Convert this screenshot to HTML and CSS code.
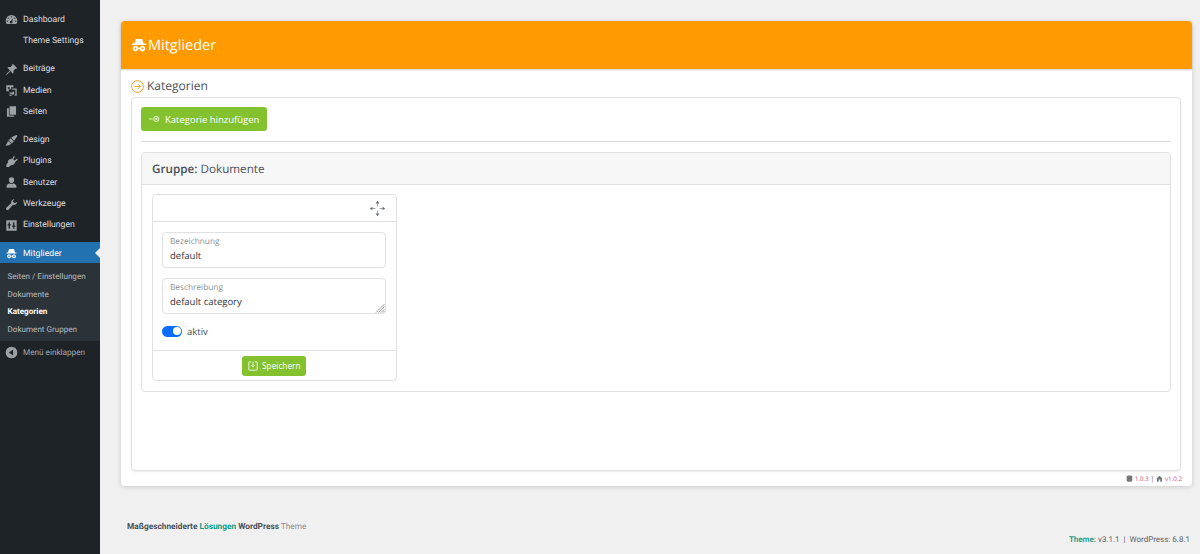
FILE: index.html
```html
<!DOCTYPE html>
<html lang="de">
  <head>
    <meta charset="utf-8" />
    <title>Mitglieder</title>
    <link rel="stylesheet" href="styles.css">
  </head>
  <body>
    <nav class="sidebar">
      <ul class="menu">
        <li class="item">
          <svg class="ico" viewBox="0 0 20 20"><path d="M10 3a9 9 0 0 0-9 9c0 2 .6 3.600 1.600 5h14.800c1-1.400 1.600-3 1.600-5a9 9 0 0 0-9-9zM10 5a1 1 0 1 1 0 2 1 1 0 0 1 0-2zM5 7a1 1 0 1 1 0 2 1 1 0 0 1 0-2zM15 7a1 1 0 1 1 0 2 1 1 0 0 1 0-2zM3.500 11.500a1 1 0 1 1 0 2 1 1 0 0 1 0-2zM16.500 11.500a1 1 0 1 1 0 2 1 1 0 0 1 0-2zM13 8l-2 4.600a2 2 0 1 1-1.500-.6z" fill-rule="evenodd"/></svg>
          Dashboard
        </li>
        <li class="item">
          <span class="ico"></span>
          Theme Settings
        </li>
        <li class="sep"></li>
        <li class="item">
          <svg class="ico" viewBox="0 0 20 20"><path d="M12 1l7 7-1.500 1-1-.5-3.500 3.500c.5 2 .2 3.500-.8 4.500L8.500 12.300 3 18l-1 0 0-1 5.700-5.500L3.500 7.300c1-1 2.500-1.300 4.500-.8L11.500 3l-.5-1z"/></svg>
          Beiträge
        </li>
        <li class="item">
          <svg class="ico" viewBox="0 0 20 20"><path d="M2 2h11v3H9.500v3H6v3H2zM6 4.500a1.500 1.500 0 1 0 0 3 1.500 1.500 0 0 0 0-3zM11 7h7v11h-3v-2h1V9h-5zM7 13h2.500v1.500H8.500V16H7zM11 12h3v4h-1.500a2 2 0 1 1 0-3H11zM7 17h3v1.500H7z" fill-rule="evenodd"/></svg>
          Medien
        </li>
        <li class="item">
          <svg class="ico" viewBox="0 0 20 20"><path d="M7 2h10v13H7zM3 5h3v11h8v2H3z"/></svg>
          Seiten
        </li>
        <li class="sep"></li>
        <li class="item">
          <svg class="ico" viewBox="0 0 20 20"><path d="M19 2.500l-1-1c-3 .8-6 2.200-8.500 4.200l4.500 4.500c2-2.500 4-5 5-7.700zM8.500 6.500L5.500 9.500l5 5 3-3zM4.500 10.500C4 13 3 15 .5 17.500c3.500.8 7-.5 9-3z"/></svg>
          Design
        </li>
        <li class="item">
          <svg class="ico" viewBox="0 0 20 20"><path d="M13.500 1.500l1.800 1-2.800 4 2.500 2 3.500-3 1 1.800-4 4c-.5 3-3 4.800-6 4.200L6 18.500H2v-3.500l2.500-3c-.5-3 1-5.500 4-6l1-.8 1.500 1.500z"/></svg>
          Plugins
        </li>
        <li class="item">
          <svg class="ico" viewBox="0 0 20 20"><path d="M10 2a4 4 0 0 1 4 4.500c0 2.500-1.800 4.500-4 4.500s-4-2-4-4.500A4 4 0 0 1 10 2zM7 11.500c1.800 1 4.200 1 6 0 2.500.5 4.500 2 4.500 4V18h-15v-2.500c0-2 2-3.500 4.500-4z"/></svg>
          Benutzer
        </li>
        <li class="item">
          <svg class="ico" viewBox="0 0 20 20"><path d="M18.500 6c0 3-3 5.300-6.300 4.500L5.500 18c-1 1-2.200 1-3.200 0s-.8-2.200 0-3.200L9.500 8C9 5 11 1.500 14.500 1.500l-2.300 3 1 2.300 2.300 1z"/></svg>
          Werkzeuge
        </li>
        <li class="item">
          <svg class="ico" viewBox="0 0 20 20"><path d="M2 2h16v16H2zM5.500 5v3H4v2h1.500v5h2v-5H9V8H7.500V5zM12.500 5v5H11v2h1.500v3h2v-3H16v-2h-1.500V5z" fill-rule="evenodd"/></svg>
          Einstellungen
        </li>
        <li class="sep"></li>
        <li class="item current">
          <svg class="ico ico-spy" viewBox="0 0 20 20"><path d="M5.500 2h9l2 6H19v2H1V8h2.500zM5.500 11.500a3.500 3.500 0 0 1 3.400 2.700h2.200a3.500 3.500 0 1 1-.1 1.600H8.900a3.500 3.500 0 1 1-3.400-4.300zM5.500 13.500a1.500 1.500 0 1 0 0 3 1.500 1.500 0 0 0 0-3zM14.500 13.500a1.500 1.500 0 1 0 0 3 1.500 1.500 0 0 0 0-3z" fill-rule="evenodd"/></svg>
          Mitglieder
        </li>
        <li class="submenu">
          <a>Seiten / Einstellungen</a>
          <a>Dokumente</a>
          <a class="active">Kategorien</a>
          <a>Dokument Gruppen</a>
        </li>
        <li class="item collapse">
          <svg class="ico" viewBox="0 0 20 20"><path d="M10 1a9 9 0 1 0 0 18 9 9 0 0 0 0-18zM12.500 5.500v9L6 10z" fill-rule="evenodd"/></svg>
          Menü einklappen
        </li>
      </ul>
    </nav>

    <div class="page">
      <main class="panel">
        <header class="panel-head">
          <svg class="head-ico" viewBox="0 0 20 20"><path d="M5.500 1.500h9l2 6.500H20v2H0V8h3.500zM5 11a4 4 0 0 1 3.900 3h2.200a4 4 0 1 1-.1 2H8.900A4 4 0 1 1 5 11zM5 13.500a1.500 1.500 0 1 0 0 3 1.500 1.500 0 0 0 0-3zM15 13.500a1.500 1.500 0 1 0 0 3 1.500 1.500 0 0 0 0-3z" fill-rule="evenodd"/></svg>
          <h1>Mitglieder</h1>
        </header>

        <div class="panel-body">
          <div class="section-title">
            <svg class="circle-ico" viewBox="0 0 16 16"><circle cx="8" cy="8" r="7.300"/><path d="M4 8h7.500M8.500 5l3 3-3 3"/></svg>
            <h2>Kategorien</h2>
          </div>

          <div class="box">
            <button class="btn btn-add">
              <svg class="add-ico" viewBox="0 0 16 10"><path d="M0 5h5"/><circle cx="10.500" cy="5" r="3.800"/><path d="M8.700 5h3.600M10.500 3.200v3.600"/></svg>
              Kategorie hinzufügen
            </button>
            <hr class="rule" />

            <section class="group">
              <div class="group-head"><b>Gruppe:</b> Dokumente</div>
              <div class="group-body">
                <div class="cat-card">
                  <div class="cat-top">
                    <svg class="move-ico" viewBox="0 0 20 20"><path class="move-line" d="M10 4v3.500M10 12.500V16M4 10h3.500M12.500 10H16"/><path d="M10 1l2.200 3H7.800zM10 19l2.200-3H7.800zM1 10l3-2.200v4.400zM19 10l-3-2.200v4.400z"/></svg>
                  </div>
                  <div class="cat-fields">
                    <div class="field">
                      <span class="field-label">Bezeichnung</span>
                      <span class="field-value">default</span>
                    </div>
                    <div class="field">
                      <span class="field-label">Beschreibung</span>
                      <span class="field-value">default category</span>
                      <svg class="resize" viewBox="0 0 10 10"><path d="M9.500 1L1 9.500M9.500 3.500L3.500 9.500M9.500 6L6 9.500M9.500 8L8 9.500"/></svg>
                    </div>
                    <div class="switch-row">
                      <span class="switch"><span class="knob"></span></span>
                      aktiv
                    </div>
                  </div>
                  <div class="cat-foot">
                    <button class="btn btn-save">
                      <svg class="save-ico" viewBox="0 0 12 12"><path d="M4 1H1.500a.5.5 0 0 0-.5.5v9a.5.5 0 0 0 .5.5h9a.5.5 0 0 0 .5-.5v-9a.5.5 0 0 0-.5-.5H8"/><path d="M6 1v6M4.200 5.200L6 7l1.800-1.800"/></svg>
                      Speichern
                    </button>
                  </div>
                </div>
              </div>
            </section>
          </div>
        </div>

        <div class="versions">
          <svg class="ver-ico" viewBox="0 0 10 10"><path d="M1 2C1 .5 9 .5 9 2v6.500C9 10 1 10 1 8.500z"/></svg>
          <span class="ver">1.0.3</span> |
          <svg class="ver-ico" viewBox="0 0 10 10"><path d="M5 1l4.500 4.500H8.500V9.500H6V6.500H4v3H1.500V5.500H.5z"/></svg>
          <span class="ver">v1.0.2</span>
        </div>
      </main>

      <footer class="foot">
        <div class="foot-left"><b>Maßgeschneiderte <em>Lösungen</em> WordPress</b> <span class="foot-theme">Theme</span></div>
        <div class="foot-right"><b>Theme:</b> v3.1.1 &nbsp;|&nbsp; WordPress: 6.8.1</div>
      </footer>
    </div>
  </body>
</html>
```

FILE: styles.css
```css
* {
  box-sizing: border-box;
}
html,
body {
  height: 100%;
}
body {
  margin: 0;
  display: flex;
  height: 554px;
  overflow: hidden;
  background: #f0f0f1;
  color: #495057;
  font-family: "Open Sans", "Noto Sans", sans-serif;
  text-rendering: geometricPrecision;
}

/* sidebar */
.sidebar {
  width: 100px;
  flex: none;
  background: #1d2327;
  color: #f0f0f1;
  font-family: Roboto, sans-serif;
  font-size: 8.700px;
}
.menu {
  list-style: none;
  margin: 0;
  padding: 8px 0 0;
}
.item {
  display: flex;
  align-items: center;
  gap: 5px;
  height: 21.300px;
  padding: 2px 0 0 5px;
  color: #dcdee0;
}
.sep {
  height: 7px;
}
.ico {
  width: 13px;
  height: 13px;
  flex: none;
  fill: #9ca1a6;
}
.current {
  position: relative;
  background: #2271b1;
  color: #fff;
}
.current .ico {
  fill: #fff;
}
.ico-spy {
  padding: 1px;
}
.current::after {
  content: "";
  position: absolute;
  right: 0;
  top: 6px;
  border: 5px solid transparent;
  border-right-color: #f0f0f1;
  border-left: 0;
}
.submenu {
  display: flex;
  flex-direction: column;
  background: #2c3338;
  padding: 5px 0 3px 7.500px;
  color: #b9bcc0;
  font-size: 8.100px;
}
.submenu a {
  height: 17.500px;
  line-height: 17.500px;
}
.submenu .active {
  color: #fff;
  font-weight: 700;
}
.collapse {
  color: #a7aaad;
  font-size: 8.200px;
}

/* main panel */
.page {
  flex: 1;
  display: flex;
  flex-direction: column;
  padding: 21px 8px 0 21px;
  min-width: 0;
}
.panel {
  height: 465px;
  background: #fff;
  border-radius: 4px;
  box-shadow: 0 1px 5px rgba(0, 0, 0, 0.16);
  display: flex;
  flex-direction: column;
}
.panel-head {
  display: flex;
  align-items: center;
  gap: 2px;
  height: 48px;
  padding-left: 11px;
  background: #ff9b00;
  color: #fff;
  border-radius: 4px 4px 0 0;
  box-shadow: 0 1px 2px rgba(0, 0, 0, 0.2);
}
.head-ico {
  width: 14px;
  height: 14px;
  fill: #fff;
}
h1 {
  margin: 0;
  font-size: 14.500px;
  font-weight: 400;
}
.panel-body {
  flex: 1;
  display: flex;
  flex-direction: column;
  padding: 7px 11px 0 10px;
}
.section-title {
  display: flex;
  align-items: center;
  gap: 3px;
  height: 21px;
}
.section-title h2 {
  margin: 0 0 2px;
}
.circle-ico {
  width: 13px;
  height: 13px;
  fill: none;
  stroke: #f0a42a;
  stroke-width: 1.200;
}
h2 {
  margin: 0;
  font-size: 12px;
  font-weight: 400;
}
.box {
  flex: 1;
  border: 1px solid #dfe1e3;
  border-radius: 4px;
  padding: 9px 9px 0;
  box-shadow: 0 1px 2px rgba(0, 0, 0, 0.08);
}
.btn {
  display: flex;
  align-items: center;
  border: 0;
  border-radius: 3px;
  background: #84c12e;
  color: #fff;
  font-family: inherit;
}
.btn-add {
  width: 126px;
  height: 24px;
  gap: 5px;
  padding: 0 0 0 8px;
  font-size: 9.500px;
}
.add-ico {
  width: 11px;
  height: 8px;
  fill: none;
  stroke: #fff;
  stroke-width: 1.200;
}
.rule {
  margin: 10px 0;
  border: 0;
  border-top: 1px solid #d8dadc;
}
.group {
  height: 240px;
  border: 1px solid #dfe1e3;
  border-radius: 4px;
}
.group-head {
  height: 32px;
  line-height: 33px;
  padding-left: 10px;
  background: #f7f7f7;
  border-bottom: 1px solid #dfe1e3;
  font-size: 11.700px;
  border-radius: 4px 4px 0 0;
}
.group-head b {
  font-weight: 600;
}
.group-body {
  padding: 9px 10px;
}
.cat-card {
  width: 245px;
  height: 187px;
  border: 1px solid #dfe1e3;
  border-radius: 4px;
  display: flex;
  flex-direction: column;
}
.cat-top {
  height: 27px;
  flex: none;
  display: flex;
  justify-content: flex-end;
  align-items: center;
  padding-right: 10px;
  border-bottom: 1px solid #dfe1e3;
}
.move-ico {
  width: 17px;
  height: 17px;
  fill: #62686d;
}
.move-line {
  fill: none;
  stroke: #8d9296;
  stroke-width: 1;
}
.cat-fields {
  flex: 1;
  display: flex;
  flex-direction: column;
  gap: 10px;
  padding: 10px 10px 10px 9px;
}
.field {
  position: relative;
  height: 36px;
  border: 1px solid #dfe1e3;
  border-radius: 4px;
  padding: 3px 7px 0;
  display: flex;
  flex-direction: column;
}
.field-label {
  font-size: 8.300px;
  line-height: 12px;
  color: #8a8f94;
}
.field-value {
  font-size: 9.500px;
  line-height: 15px;
  color: #30363b;
}
.resize {
  position: absolute;
  right: 0;
  bottom: 0;
  width: 10px;
  height: 10px;
  fill: none;
  stroke: #8a8a8a;
  stroke-width: 0.800;
}
.switch-row {
  display: flex;
  align-items: center;
  gap: 5px;
  font-size: 9.500px;
  height: 14px;
}
.switch {
  width: 20px;
  height: 11px;
  border-radius: 6px;
  background: #0d6efd;
  display: flex;
  justify-content: flex-end;
  align-items: center;
  padding-right: 1.500px;
}
.knob {
  width: 8px;
  height: 8px;
  border-radius: 50%;
  background: #fff;
}
.cat-foot {
  height: 30px;
  flex: none;
  display: flex;
  justify-content: center;
  align-items: center;
  padding-right: 1px;
  border-top: 1px solid #dfe1e3;
}
.btn-save {
  width: 64px;
  height: 20px;
  gap: 4px;
  padding: 0 0 0 6px;
  font-size: 8.300px;
}
.save-ico {
  width: 10px;
  height: 10px;
  fill: none;
  stroke: #fff;
}
.versions {
  height: 15px;
  flex: none;
  display: flex;
  justify-content: flex-end;
  align-items: center;
  gap: 2px;
  padding-right: 10px;
  font-size: 6.200px;
  color: #555;
}
.ver {
  color: #c9506a;
}
.ver-ico {
  width: 7px;
  height: 7px;
  fill: #777;
}

/* footer */
.foot {
  flex: 1;
  display: flex;
  justify-content: space-between;
  font-family: Roboto, sans-serif;
  font-size: 8.300px;
  color: #5c636a;
  padding-left: 6px;
}
.foot-left {
  padding-top: 36px;
}
.foot-left em {
  font-style: normal;
  color: #0f9d84;
}
.foot-left b {
  color: #495057;
}
.foot-theme {
  color: #868b90;
}
.foot-right {
  padding-top: 49px;
  padding-right: 2px;
  font-size: 8px;
}
.foot-right b {
  color: #1a9d8a;
  font-weight: 600;
}
```
